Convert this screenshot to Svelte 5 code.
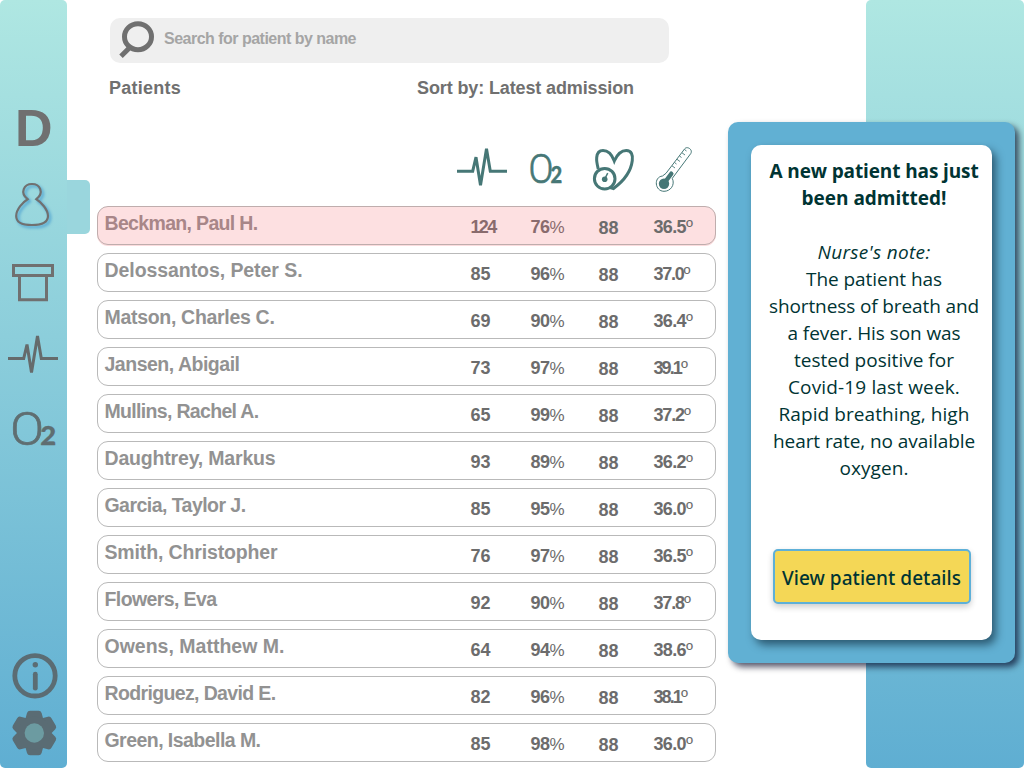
<script>
  const patients = [
    { name: 'Beckman, Paul H.', w: 153, pulse: '124', o2: '76', bp: '88', temp: '36.5', tw: 39, alert: true },
    { name: 'Delossantos, Peter S.', w: 198, pulse: '85', o2: '96', bp: '88', temp: '37.0', tw: 36.5 },
    { name: 'Matson, Charles C.', w: 170, pulse: '69', o2: '90', bp: '88', temp: '36.4', tw: 39 },
    { name: 'Jansen, Abigail', w: 135, pulse: '73', o2: '97', bp: '88', temp: '39.1', tw: 34 },
    { name: 'Mullins, Rachel A.', w: 154, pulse: '65', o2: '99', bp: '88', temp: '37.2', tw: 37 },
    { name: 'Daughtrey, Markus', w: 171, pulse: '93', o2: '89', bp: '88', temp: '36.2', tw: 39 },
    { name: 'Garcia, Taylor J.', w: 141, pulse: '85', o2: '95', bp: '88', temp: '36.0', tw: 39 },
    { name: 'Smith, Christopher', w: 173, pulse: '76', o2: '97', bp: '88', temp: '36.5', tw: 39 },
    { name: 'Flowers, Eva', w: 112, pulse: '92', o2: '90', bp: '88', temp: '37.8', tw: 37 },
    { name: 'Owens, Matthew M.', w: 180, pulse: '64', o2: '94', bp: '88', temp: '38.6', tw: 39 },
    { name: 'Rodriguez, David E.', w: 171, pulse: '82', o2: '96', bp: '88', temp: '38.1', tw: 34 },
    { name: 'Green, Isabella M.', w: 156, pulse: '85', o2: '98', bp: '88', temp: '36.0', tw: 39 }
  ];

  const note = [
    ['The patient has', 136],
    ['shortness of breath and', 210],
    ['a fever. His son was', 173],
    ['tested positive for', 160],
    ['Covid-19 last week.', 172],
    ['Rapid breathing, high', 191],
    ['heart rate, no available', 202],
    ['oxygen.', 69]
  ];

  // Tracks a line of text so that it takes the given width.
  function fit(node, width) {
    const natural = node.getBoundingClientRect().width;
    const count = node.textContent.length;
    node.style.letterSpacing = (width - natural) / count + 'px';
  }

  const ecg = 'M0 23.5H15.7L19 9.5L23.5 37.5L29.5 1L33.3 23.5H50';
</script>

<div class="app">
  <nav class="side">
    <div class="letter">D</div>
    <svg class="person" width="67" height="54" viewBox="0 180 67 54">
      <path d="M27.6 199.2C19.5 192.5 24 184 32 184C40 184 44.5 192.5 36.4 199.2C41 202 48 209.5 48 216C48 223.5 41 225 32 225C23 225 16.2 223.5 16.2 216C16.2 209.5 23 202 27.6 199.2Z" />
    </svg>
    <svg class="box" width="67" height="40" viewBox="0 263 67 40">
      <path d="M13.5 265.5H52.5V275.5H13.5ZM19.5 276V299.8H46.5V276" />
    </svg>
    <svg class="wave" width="50" height="42" viewBox="0 0 50 42"><path d={ecg} /></svg>
    <svg class="oxygen" width="67" height="42" viewBox="0 406 67 42">
      <text transform="translate(10.3 444.5) scale(1.06 1)"><tspan class="o" font-size="47">O</tspan><tspan class="two" font-size="26" dx="-3.5">2</tspan></text>
    </svg>
    <svg class="info" width="67" height="48" viewBox="0 652 67 48">
      <circle cx="35" cy="675.8" r="20.2" />
      <circle class="dot" cx="35.3" cy="664.8" r="2.7" />
      <path d="M35.3 674.2V688.2" />
    </svg>
    <svg class="gear" width="67" height="48" viewBox="-34.3 -24 67 48">
      {#each [0, 60, 120, 180, 240, 300] as a}
        <path transform="rotate({a})" d="M-9.5 -12L-7.3 -20Q-6.6 -22.3 -4.3 -22.3H4.3Q6.6 -22.3 7.3 -20L9.5 -12Z" />
      {/each}
      <circle r="16.3" />
      <circle class="hub" r="9.7" />
    </svg>
    <div class="tab"></div>
  </nav>

  <main>
    <div class="search">
      <svg width="40" height="40" viewBox="0 0 40 40">
        <ellipse cx="21" cy="15.7" rx="13.5" ry="13" />
        <path d="M12.8 26.5L4 35.3" />
      </svg>
      <span use:fit={192}>Search for patient by name</span>
    </div>
    <div class="titles">
      <span use:fit={72}>Patients</span>
      <span class="sort" use:fit={217}>Sort by: Latest admission</span>
    </div>

    <svg class="metrics" width="250" height="50" viewBox="450 145 250 50">
      <path class="line" transform="translate(457 147.7)" d={ecg} />
      <text transform="translate(528.5 182.5) scale(.92 1)"><tspan class="o" font-size="40">O</tspan><tspan class="two" font-size="22" dx="-3.3">2</tspan></text>
      <path class="line" d="M598.3 169C597 164 596.3 161.5 596.7 157.5C597.2 152.5 599.8 150.6 603 150.6C608.5 150.6 612 155 614.3 161C617 155 621 150.6 626.3 150.6C631.5 150.6 633 155 632.3 160.5C631 171.5 623 181.5 613.5 188.5L610 187.5" />
      <circle class="line gauge" cx="604.7" cy="178.7" r="10.3" />
      <circle class="solid" cx="604.7" cy="179.2" r="2.8" />
      <path class="needle" d="M604.7 179L607.7 173.2" />
      <path class="thin" d="M666 173.3L684.7 148.8C686.8 145.8 693.2 149.3 690.8 153.5L672.3 178.3C675.3 185 670.5 191.3 664 191.3C654.8 191.3 653.3 177 662.5 176Z" />
      <circle class="solid" cx="664" cy="183.8" r="5.2" />
      <path class="mercury" d="M665.5 181.5L671.3 173.7" />
      <path class="thin ticks" d="M672 165.8L675 168M674.5 162.5L676.5 164M677 159.3L680 161.5M679.5 156L681.5 157.5M682 152.8L685 155M684.5 149.5L686.5 151" />
    </svg>

    <div class="rows">
      {#each patients as p}
        <div class="row" class:alert={p.alert}>
          <span class="name"><b use:fit={p.w}>{p.name}</b></span>
          <span class="num strong"><b use:fit={p.pulse.length === 3 ? 25 : 20}>{p.pulse}</b></span>
          <span class="num strong"><b use:fit={19}>{p.o2}</b><i use:fit={14}>%</i></span>
          <span class="num low"><b use:fit={20}>{p.bp}</b></span>
          <span class="num"><b use:fit={p.tw - 6.5}>{p.temp}</b><i class="deg">º</i></span>
        </div>
      {/each}
    </div>
  </main>

  <aside class="side right"></aside>

  <section class="popup">
    <div class="card">
      <p class="head"><span use:fit={209}>A new patient has just</span></p>
      <p class="head"><span use:fit={145}>been admitted!</span></p>
      <p class="by"><span use:fit={113}>Nurse's note:</span></p>
      {#each note as [text, w]}
        <p><span use:fit={w}>{text}</span></p>
      {/each}
      <button><span use:fit={179}>View patient details</span></button>
    </div>
  </section>
</div>

<style>
  :global(body) { margin: 0; background: #fff; }
  .app {
    position: relative;
    display: flex;
    width: 1024px;
    height: 768px;
    overflow: hidden;
    background: #fff;
    font-family: "Liberation Sans", Arial, sans-serif;
    white-space: nowrap;
  }
  .side {
    position: relative;
    box-sizing: border-box;
    width: 67px;
    height: 768px;
    flex: none;
    display: flex;
    flex-direction: column;
    border-radius: 5px;
    background: linear-gradient(#afe7e2, #5faed2);
  }
  .right { width: 158px; }
  .tab {
    position: absolute;
    left: 67px;
    top: 180px;
    width: 23px;
    height: 54px;
    border-radius: 0 5px 5px 0;
    background: #9ad6dd;
  }
  svg { display: block; flex: none; fill: none; overflow: visible; }
  .letter {
    margin-top: 98px;
    padding-left: 15px;
    height: 60px;
    line-height: 60px;
    font-size: 52px;
    font-weight: 700;
    color: #707070;
  }
  .person { margin-top: 22px; stroke: #707070; stroke-width: 2.2; filter: drop-shadow(2px 2px 1.5px #4a9fd0); }
  .box { margin-top: 29px; stroke: #707070; stroke-width: 3; }
  .wave { margin: 32px 0 0 8px; stroke: #656b6c; stroke-width: 3; }
  .oxygen { margin-top: 29px; fill: #5f6e71; stroke: #5f6e71; }
  .o { font-family: Roboto, sans-serif; font-weight: 300; stroke-width: .7; }
  .two { font-family: Lato, sans-serif; font-weight: 900; stroke-width: .3; }
  .info { margin-top: 204px; stroke: #5b6c73; stroke-width: 4.8; stroke-linecap: round; }
  .info .dot { fill: #5b6c73; stroke: none; }
  .gear { margin-top: 9px; fill: #5a6c74; }
  .gear .hub { fill: #6c9ba1; }

  main { width: 799px; flex: none; }
  .search {
    display: flex;
    margin: 18px 0 0 43px;
    width: 559px;
    height: 45px;
    border-radius: 10px;
    background: #efefef;
    color: #a5a5a5;
    font-size: 16px;
    font-weight: 700;
    line-height: 41px;
  }
  .search svg { margin: 3px 7px 0 7px; stroke: #707070; stroke-width: 5; }
  .titles {
    display: flex;
    margin: 14px 0 0 42px;
    height: 22px;
    line-height: 22px;
    font-size: 18px;
    font-weight: 700;
    color: #707070;
  }
  .sort { margin-left: 236px; }
  .metrics { margin: 46px 0 0 383px; fill: #467776; }
  .metrics text { stroke: #467776; }
  .line { fill: none; stroke: #467776; stroke-width: 3; }
  .metrics .gauge { fill: #fff; }
  .solid { fill: #467776; }
  .needle { stroke: #467776; stroke-width: 1.5; }
  .thin { fill: none; stroke: #467776; stroke-width: 1; }
  .ticks { stroke-width: .9; }
  .mercury { stroke: #467776; stroke-width: 4.4; stroke-linecap: round; }

  .rows { display: flex; flex-direction: column; gap: 8px; margin: 11px 0 0 30px; width: 619px; }
  .row {
    box-sizing: border-box;
    display: grid;
    grid-template-columns: 366px 60px 68px 55px 1fr;
    height: 39px;
    padding-left: 6.5px;
    border: 1px solid #b9b9b9;
    border-radius: 11px;
    color: #6c6c6c;
  }
  .alert {
    background: #fde0e1;
    border-color: #bfadad;
    box-shadow: 0 1px 0 #fbdcdd;
  }
  .name { line-height: 33px; font-size: 19.5px; color: #929292; }
  .num { line-height: 40px; font-size: 18px; }
  .low { line-height: 42px; }
  .num i { font-style: normal; font-weight: 400; font-size: 17px; }
  .num .deg { font-size: 19px; }
  .alert .name { color: #a88688; }
  .alert .strong { color: #896b6d; }

  .popup {
    position: absolute;
    left: 728px;
    top: 122px;
    box-sizing: border-box;
    width: 287px;
    height: 541px;
    padding: 23px;
    border-radius: 10px;
    background: #61b0d3;
    box-shadow: 4px 4px 6px rgba(0, 0, 30, .65);
  }
  .card {
    box-sizing: border-box;
    width: 241px;
    height: 495px;
    padding: 13px 0 0 5px;
    border-radius: 10px;
    background: #fff;
    box-shadow: 4px 5px 8px rgba(0, 20, 35, .55);
    display: flex;
    flex-direction: column;
    align-items: center;
    font-family: "Open Sans", "Noto Sans", sans-serif;
    font-size: 19px;
    line-height: 27px;
    color: #003433;
  }
  p { margin: 0; }
  .head { font-weight: 700; }
  .by { margin-top: 27px; font-style: italic; }
  button {
    box-sizing: border-box;
    width: 198px;
    height: 55px;
    margin: 67px 5px 0 0;
    padding: 2px 0 0;
    border: 2px solid #5eb0d8;
    border-radius: 5px;
    background: #f4d756;
    box-shadow: 0 3px 6px rgba(0, 0, 0, .2);
    font: 500 19px "Noto Sans", "Open Sans", sans-serif;
    color: #003433;
  }
</style>
